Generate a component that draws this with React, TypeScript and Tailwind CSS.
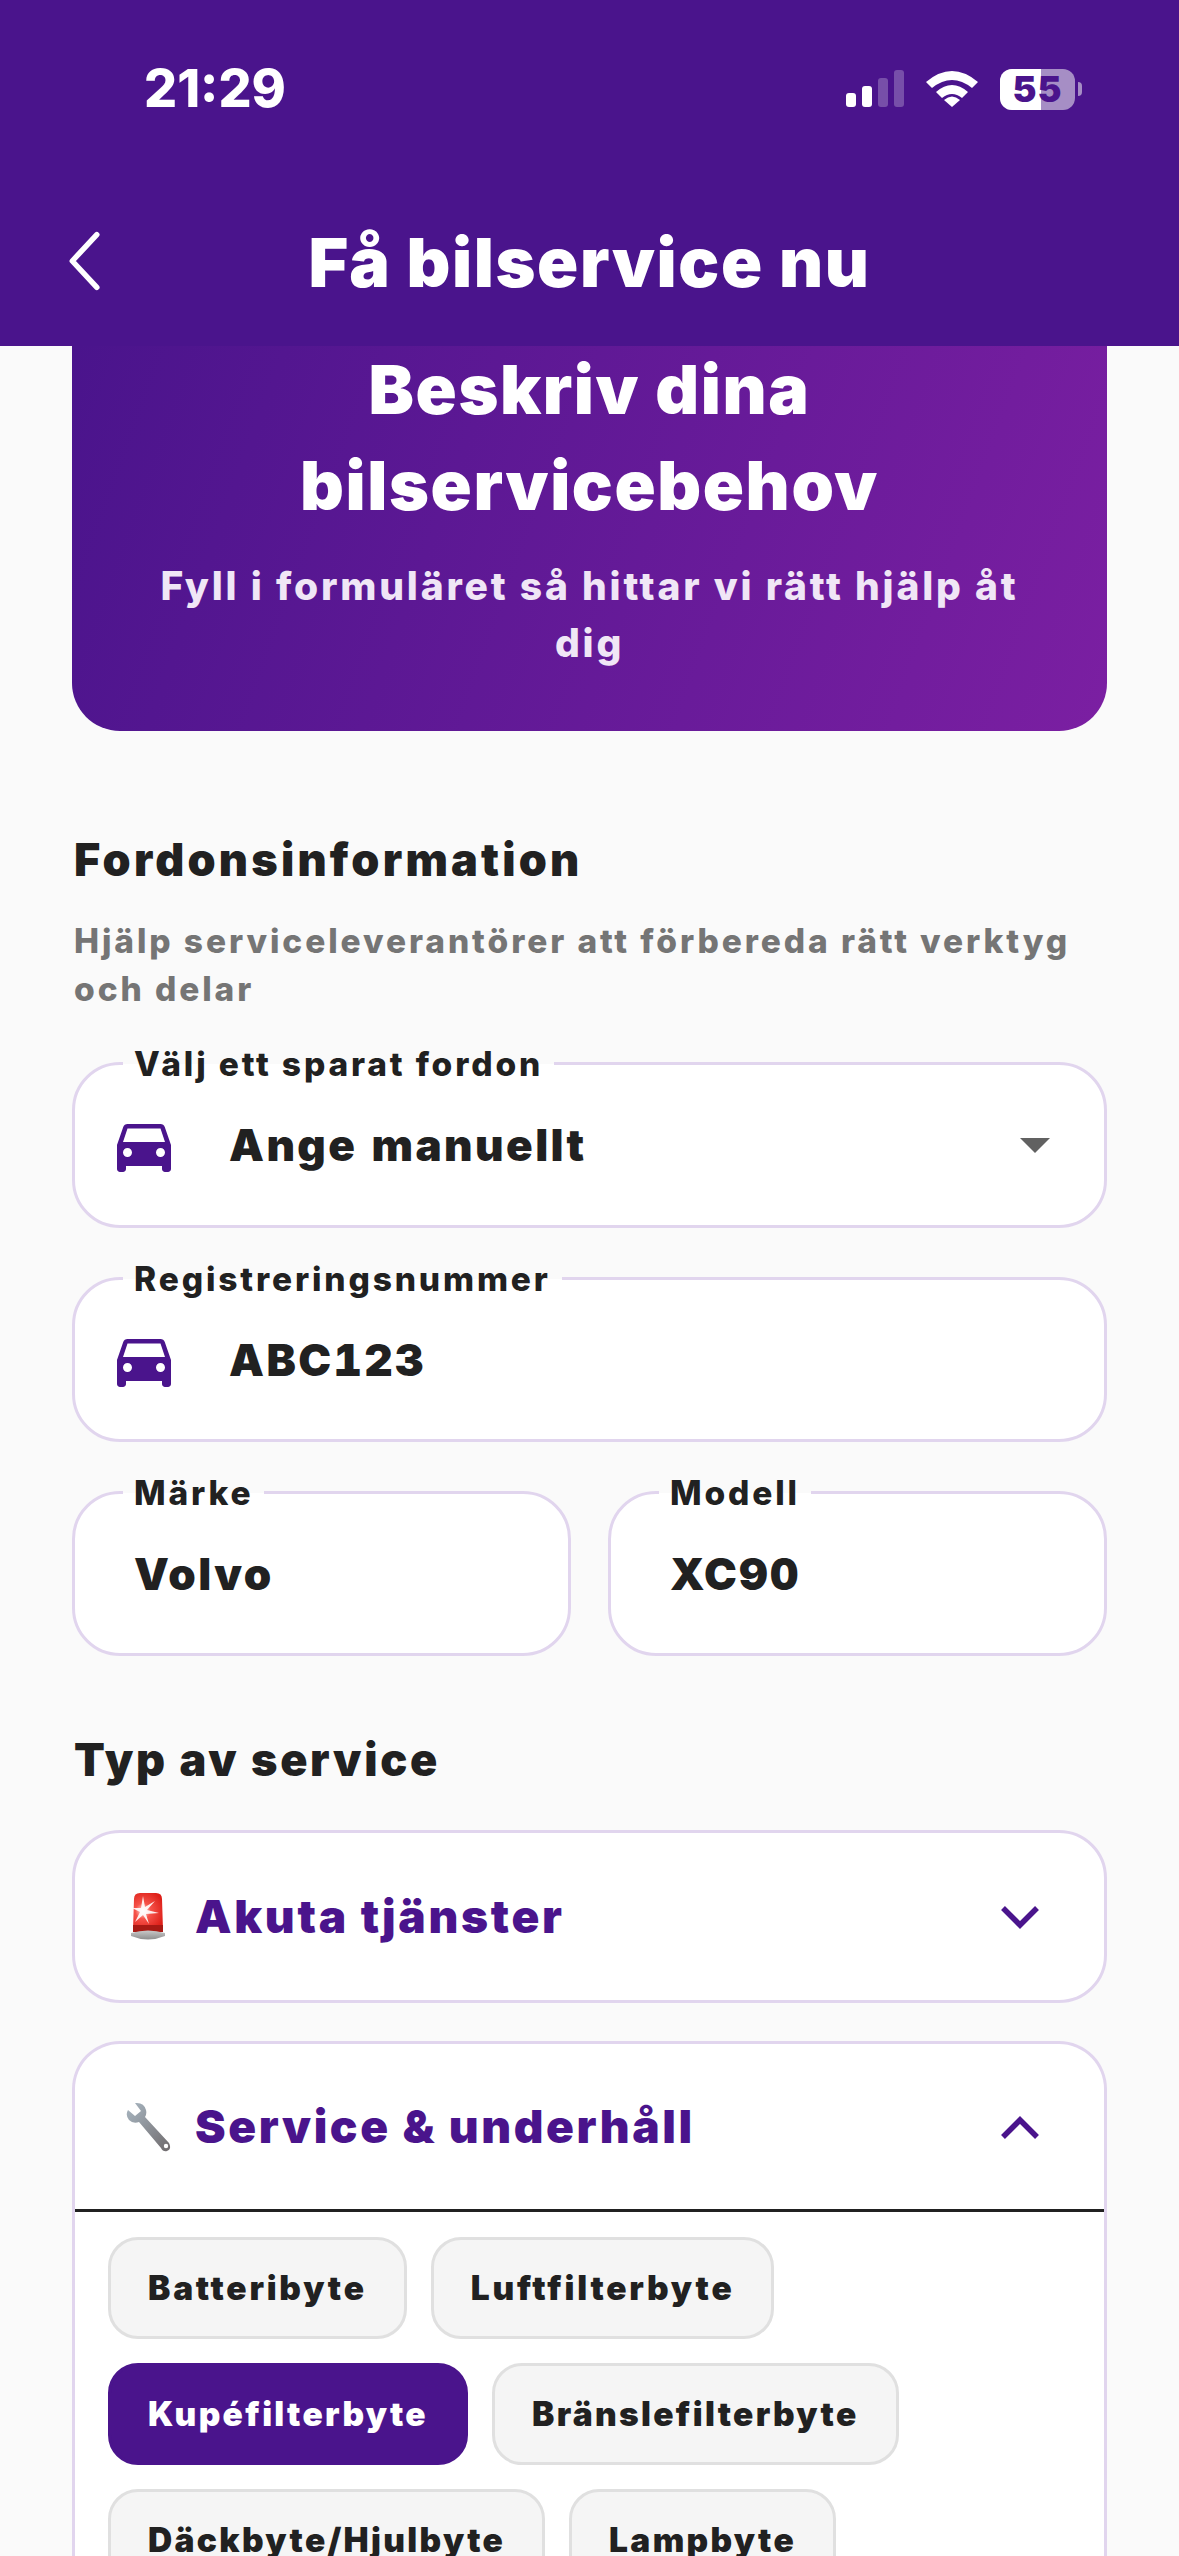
import React from 'react'

const CAR = 'M18.92 6.01C18.72 5.42 18.16 5 17.5 5h-11c-.66 0-1.21.42-1.42 1.01L3 12v8c0 .55.45 1 1 1h1c.55 0 1-.45 1-1v-1h12v1c0 .55.45 1 1 1h1c.55 0 1-.45 1-1v-8l-2.08-5.99zM6.5 16c-.83 0-1.5-.67-1.5-1.5S5.67 13 6.5 13s1.5.67 1.5 1.5S7.33 16 6.5 16zm11 0c-.83 0-1.5-.67-1.5-1.5s.67-1.5 1.5-1.5 1.5.67 1.5 1.5-.67 1.5-1.5 1.5zM5 11l1.5-4.5h11L19 11H5z'

function CarIcon() {
  return (
    <svg viewBox="0 0 24 24" className="w-[72px] h-[72px] shrink-0 fill-[#4a148c]">
      <path d={CAR} />
    </svg>
  )
}

function StatusIcons() {
  return (
    <div className="flex items-center">
      <svg width="58" height="38" viewBox="0 0 58 38" className="mr-[22px]">
        <rect x="0" y="23" width="10" height="14" rx="3" fill="#fff" />
        <rect x="16" y="16" width="10" height="21" rx="3" fill="#fff" />
        <rect x="32" y="8" width="10" height="29" rx="3" fill="#fff" fillOpacity="0.25" />
        <rect x="48" y="0" width="10" height="37" rx="3" fill="#fff" fillOpacity="0.25" />
      </svg>
      <svg width="52" height="38" viewBox="0 0 52 38" className="mr-[22px]">
        <path d="M0 12 Q26 -10 52 12 L46 18 Q26 2 6 18Z" fill="#fff" />
        <path d="M10 22 Q26 8 42 22 L36 28 Q26 20 16 28Z" fill="#fff" />
        <path d="M18 30 Q26 23 34 30 L26 37Z" fill="#fff" />
      </svg>
      <div className="relative w-[75px] h-[41px] rounded-[12px] bg-[#a68ec5] overflow-hidden">
        <div className="absolute left-0 top-0 bottom-0 w-[41px] bg-white" />
        <span className="absolute inset-0 flex items-center justify-center text-[36px] leading-none font-black text-[#4a148c] tracking-[1px]">55</span>
      </div>
      <div className="w-[4px] h-[14px] ml-[3px] rounded-r-full bg-[#a68ec5]" />
    </div>
  )
}

function Field({ label, value, icon, caret, tall }: { label: string; value: string; icon?: boolean; caret?: boolean; tall?: boolean }) {
  return (
    <div className={`relative ${tall ? 'h-[166px]' : 'h-[165px]'} rounded-[48px] border-[3px] border-[#e1d5ee] bg-white flex items-center pl-[33px] pr-[54px]`}>
      <span className="absolute left-[48px] top-[-26px] px-[11px] h-[50px] flex items-center bg-[linear-gradient(to_bottom,#fafafa_50%,#ffffff_50%)] text-[33.5px] font-extrabold tracking-[2.85px] text-[#212121] whitespace-nowrap">
        {label}
      </span>
      {icon && <CarIcon />}
      <span className={`${icon ? 'ml-[49px]' : 'ml-[26px]'} text-[44px] font-black tracking-[2.4px] tabular-nums text-[#212121]`}>{value}</span>
      {caret && <div className="ml-auto w-0 h-0 border-x-[15px] border-x-transparent border-t-[15px] border-t-[#616161]" />}
    </div>
  )
}

function Chevron({ up }: { up?: boolean }) {
  return (
    <svg width="40" height="26" viewBox="0 0 40 26" fill="none" stroke="#4a148c" strokeWidth="5.5" className="ml-auto mr-[64px]">
      <path d={up ? 'M3 23 L20 6 L37 23' : 'M3 4 L20 21 L37 4'} />
    </svg>
  )
}

function Siren() {
  return (
    <svg width="34" height="49" viewBox="0 0 34 49" className="shrink-0">
      <defs>
        <radialGradient id="flash" cx="12" cy="19" r="22" gradientUnits="userSpaceOnUse">
          <stop offset="0" stopColor="#ffe9e6" />
          <stop offset="0.35" stopColor="#f6534a" />
          <stop offset="1" stopColor="#dd1f18" />
        </radialGradient>
        <linearGradient id="base" x1="0" x2="0" y1="0" y2="1">
          <stop offset="0" stopColor="#c9c9c9" />
          <stop offset="1" stopColor="#8e8e8e" />
        </linearGradient>
      </defs>
      <path d="M2 38 L3 7 Q3 1 9 1 L25 1 Q31 1 31 7 L32 38Z" fill="url(#flash)" />
      <path d="M2 33 L32 33 L32 40 L2 40Z" fill="#a81a14" />
      <path d="M0 41 Q17 36 34 41 L34 44 Q17 51 0 44Z" fill="url(#base)" />
      <path d="M12 4 L14 15 L24 9 L16 18 L28 21 L15 22 L18 32 L12 23 L4 30 L9 20 L1 16 L10 16Z" fill="#fff" fillOpacity="0.9" />
    </svg>
  )
}

function Wrench() {
  return (
    <svg width="46" height="50" viewBox="0 0 46 50" className="shrink-0">
      <defs>
        <linearGradient id="steel" x1="0" x2="1" y1="0" y2="1">
          <stop offset="0" stopColor="#a9b7c2" />
          <stop offset="1" stopColor="#6f6a6c" />
        </linearGradient>
      </defs>
      <path d="M3 8 L10 14 L16 9 L10 1 Q19 0 21 8 Q22 12 20 15 L44 41 Q47 47 42 49 Q38 50 36 46 L14 20 Q8 22 4 18 Q0 13 3 8Z" fill="url(#steel)" />
      <circle cx="41" cy="44" r="2.2" fill="#fff" />
    </svg>
  )
}

function Chip({ label, active, wide }: { label: string; active?: boolean; wide?: boolean }) {
  return (
    <div
      className={`h-[102px] px-[37px] rounded-[30px] border-[3px] flex items-center text-[33.5px] font-black whitespace-nowrap ${wide ? 'tracking-[2.75px]' : 'tracking-[2.3px]'} ${
        active ? 'bg-[#4a148c] border-[#4a148c] text-white' : 'bg-[#f5f5f5] border-[#e0e0e0] text-[#212121]'
      }`}
    >
      {label}
    </div>
  )
}

export default function App() {
  return (
    <div className="w-[1179px] h-[2556px] overflow-hidden bg-[#fafafa] font-['Inter',sans-serif]">
      <header className="h-[346px] bg-[#4a148c] relative z-10">
        <div className="flex items-center justify-between pl-[144px] pr-[97px] pt-[58px] h-[120px]">
          <span className="text-[52px] leading-[60px] font-extrabold text-white">21:29</span>
          <StatusIcons />
        </div>
        <div className="relative flex items-center justify-center mt-[97px] h-[90px]">
          <svg width="42" height="60" viewBox="0 0 42 66" fill="none" stroke="#fff" strokeWidth="6" strokeLinecap="round" strokeLinejoin="round" className="absolute left-[64px] top-[14px]">
            <path d="M34 4 L7 33 L34 62" />
          </svg>
          <h1 className="text-[68px] leading-[90px] font-black tracking-[1.6px] text-white">Få bilservice nu</h1>
        </div>
      </header>

      <main className="px-[72px]">
        <section className="h-[385px] rounded-b-[48px] bg-[linear-gradient(110deg,#4a148c,#7b1fa2)] flex flex-col items-center text-center text-white">
          <h2 className="mt-[-5px] text-[68px] leading-[96px] font-black tracking-[1.6px]">
            Beskriv dina
            <br />
            bilservicebehov
          </h2>
          <p className="mt-[24px] w-[900px] text-[39px] leading-[57px] font-extrabold tracking-[2.8px] text-[#f0e6f6]">
            Fyll i formuläret så hittar vi rätt hjälp åt dig
          </p>
        </section>

        <h3 className="mt-[100px] ml-[2px] text-[45px] leading-[58px] font-black tracking-[3.2px] text-[#212121]">Fordonsinformation</h3>
        <p className="mt-[28px] ml-[2px] text-[33.5px] leading-[48px] font-extrabold tracking-[2.9px] text-[#757575]">
          Hjälp serviceleverantörer att förbereda rätt verktyg och delar
        </p>

        <div className="mt-[49px] flex flex-col gap-[49px]">
          <Field label="Välj ett sparat fordon" value="Ange manuellt" icon caret tall />
          <Field label="Registreringsnummer" value="ABC123" icon />
          <div className="grid grid-cols-2 gap-[37px]">
            <Field label="Märke" value="Volvo" />
            <Field label="Modell" value="XC90" />
          </div>
        </div>

        <h3 className="mt-[75px] ml-[2px] text-[45px] leading-[58px] font-black tracking-[2.7px] text-[#212121]">Typ av service</h3>

        <div className="mt-[41px] h-[173px] rounded-[48px] border-[3px] border-[#e1d5ee] bg-white flex items-center pl-[56px]">
          <Siren />
          <span className="ml-[30px] text-[46px] font-black tracking-[2.7px] text-[#4a148c]">Akuta tjänster</span>
          <Chevron />
        </div>

        <div className="mt-[38px] rounded-t-[48px] border-x-[3px] border-t-[3px] border-[#e1d5ee] bg-white">
          <div className="h-[168px] flex items-center pl-[50px] border-b-[3px] border-[#212121]">
            <Wrench />
            <span className="ml-[24px] text-[46px] font-black tracking-[2.6px] text-[#4a148c]">Service &amp; underhåll</span>
            <Chevron up />
          </div>
          <div className="pt-[25px] px-[33px] flex flex-col gap-[24px]">
            <div className="flex gap-[24px]">
              <Chip label="Batteribyte" wide />
              <Chip label="Luftfilterbyte" wide />
            </div>
            <div className="flex gap-[24px]">
              <Chip label="Kupéfilterbyte" active />
              <Chip label="Bränslefilterbyte" />
            </div>
            <div className="flex gap-[24px]">
              <Chip label="Däckbyte/Hjulbyte" />
              <Chip label="Lampbyte" />
            </div>
          </div>
        </div>
      </main>
    </div>
  )
}
